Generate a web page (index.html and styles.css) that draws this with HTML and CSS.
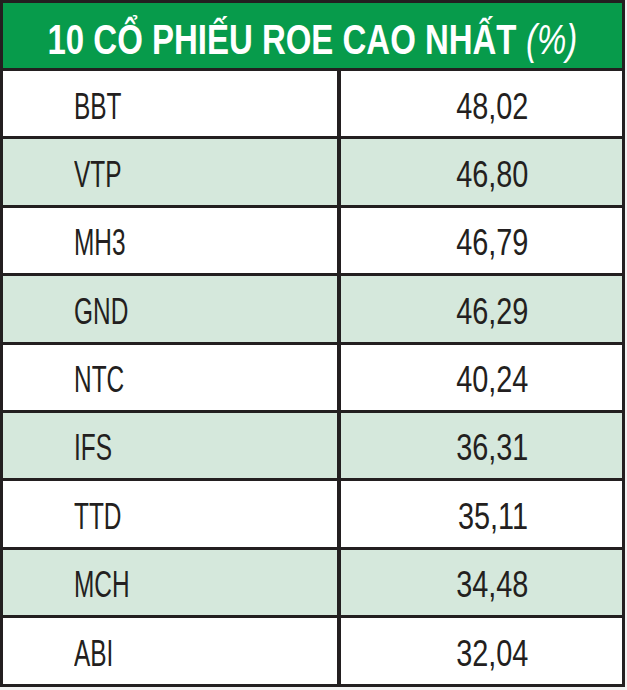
FILE: index.html
```html
<!DOCTYPE html>
<html lang="vi">
<head>
<meta charset="utf-8">
<title>10 cổ phiếu ROE cao nhất</title>
<link rel="stylesheet" href="styles.css">
</head>
<body>
<div class="page">
  <div class="table">
    <div class="head"><div class="head-line"><span class="title">10 CỔ PHIẾU ROE CAO NHẤT</span><span class="unit">(%)</span></div></div>
    <div class="row"><div class="code"><span>BBT</span></div><div class="val"><span>48,02</span></div></div>
    <div class="row alt"><div class="code"><span>VTP</span></div><div class="val"><span>46,80</span></div></div>
    <div class="row"><div class="code"><span>MH3</span></div><div class="val"><span>46,79</span></div></div>
    <div class="row alt"><div class="code"><span>GND</span></div><div class="val"><span>46,29</span></div></div>
    <div class="row"><div class="code"><span>NTC</span></div><div class="val"><span>40,24</span></div></div>
    <div class="row alt"><div class="code"><span>IFS</span></div><div class="val"><span>36,31</span></div></div>
    <div class="row"><div class="code"><span>TTD</span></div><div class="val"><span>35,11</span></div></div>
    <div class="row alt"><div class="code"><span>MCH</span></div><div class="val"><span>34,48</span></div></div>
    <div class="row"><div class="code"><span>ABI</span></div><div class="val"><span>32,04</span></div></div>
  </div>
</div>
</body>
</html>
```
FILE: styles.css
```css
html, body {
  margin: 0;
  padding: 0;
  background: #f2f2f2;
}
.page {
  width: 627px;
  height: 690px;
  background: #f2f2f2;
}
.table {
  width: 625px;
  box-sizing: border-box;
  border: 3px solid #231f20;
  background: #ffffff;
  font-family: "Liberation Sans", Arial, sans-serif;
  color: #231f20;
}
.head {
  height: 65px;
  background: #079b4b;
  color: #ffffff;
  display: flex;
  justify-content: center;
  align-items: flex-start;
  padding-top: 15.5px;
  box-sizing: border-box;
  font-size: 42px;
  line-height: 1;
  overflow: hidden;
}
.head-line {
  display: flex;
  gap: 12px;
  white-space: nowrap;
  transform: scaleX(0.785);
  transform-origin: center top;
}
.title {
  font-weight: bold;
}
.unit {
  font-style: italic;
  font-weight: normal;
}
.row {
  display: grid;
  grid-template-columns: 334px 1fr;
  height: 68.4px;
  border-top: 3.4px solid #231f20;
  box-sizing: border-box;
  font-size: 37px;
  line-height: 1;
  background: #ffffff;
}
.row.alt {
  background: #d5e8dc;
}
.code {
  padding-left: 71px;
  padding-top: 16.5px;
  white-space: nowrap;
}
.code span {
  display: inline-block;
  transform: scaleX(0.66);
  transform-origin: left top;
}
.val {
  display: flex;
  justify-content: center;
  align-items: flex-start;
  border-left: 4px solid #231f20;
  padding-left: 22px;
  padding-top: 16.5px;
  white-space: nowrap;
}
.val span {
  display: inline-block;
  transform: scaleX(0.78);
  transform-origin: center top;
}
```
